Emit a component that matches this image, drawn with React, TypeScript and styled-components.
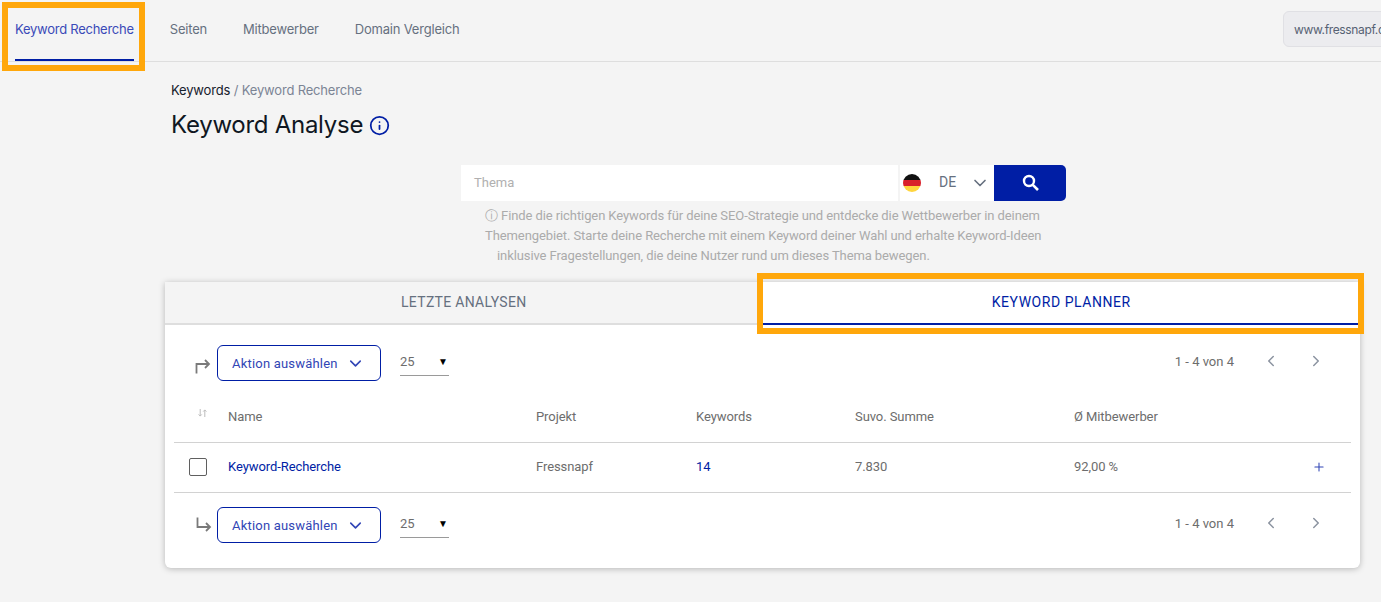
import React from "react";
import styled, { createGlobalStyle } from "styled-components";
import { ChevronDown, ChevronLeft, ChevronRight, Info, Plus } from "lucide-react";

const GlobalStyle = createGlobalStyle`
  html, body { margin: 0; padding: 0; background: #f4f4f4; overflow: hidden; }
  body { font-family: Roboto, "Liberation Sans", sans-serif; }
  * { box-sizing: border-box; }
`;

const BLUE = "#001ea5";

const Page = styled.div`
  position: relative;
  width: 1381px;
  height: 602px;
  overflow: hidden;
`;

const TopBar = styled.div`
  height: 62px;
  border-bottom: 1px solid #dedede;
  display: flex;
  justify-content: space-between;
  padding-left: 15px;
  font-family: Inter, "Noto Sans", sans-serif;
`;

const Nav = styled.nav`
  display: flex;
  gap: 36px;
`;

const NavLink = styled.a<{ $active?: boolean }>`
  height: 61px;
  padding-top: 21px;
  font-size: 13px;
  line-height: 16px;
  letter-spacing: ${(p) => (p.$active ? "-0.26px" : "-0.2px")};
  color: ${(p) => (p.$active ? "#3a4ab8" : "#66707f")};
  border-bottom: 2px solid ${(p) => (p.$active ? BLUE : "transparent")};
`;

const DomainBox = styled.div`
  width: 140px;
  height: 36px;
  margin-top: 11px;
  margin-right: -42px;
  padding: 10px;
  font-size: 12px;
  line-height: 16px;
  letter-spacing: -0.35px;
  white-space: nowrap;
  overflow: hidden;
  color: #566173;
  background: #ececef;
  border: 1px solid #e0e0e4;
  border-radius: 6px;
`;

const Highlight = styled.div`
  position: absolute;
  border: 6px solid #ffa70b;
  pointer-events: none;
`;

const NavHighlight = styled(Highlight)`
  left: 2px;
  top: 2px;
  width: 143px;
  height: 69px;
`;

const TabHighlight = styled(Highlight)`
  left: 757px;
  top: 273px;
  width: 607px;
  height: 61px;
`;

const Main = styled.main`
  padding: 19px 21px 0 165px;
`;

const Breadcrumb = styled.div`
  padding-left: 6px;
  font-family: Inter, "Noto Sans", sans-serif;
  font-size: 13px;
  line-height: 18px;
  letter-spacing: -0.17px;
  color: #7b8494;

  b {
    font-weight: 400;
    color: #16202c;
  }
`;

const Heading = styled.h1`
  display: flex;
  align-items: center;
  gap: 6px;
  margin: 11px 0 0;
  padding-left: 6px;
  font-family: Inter, "Noto Sans", sans-serif;
  font-size: 24px;
  line-height: 30px;
  font-weight: 400;
  letter-spacing: -0.27px;
  color: #0f1722;

  svg {
    color: ${BLUE};
  }
`;

const SearchBlock = styled.section`
  width: 605px;
  margin: 25px 0 0 296px;
`;

const SearchBar = styled.div`
  display: flex;
  height: 36px;
`;

const TopicInput = styled.div`
  flex: 1;
  padding: 10px 13px;
  font-size: 13px;
  line-height: 15px;
  color: #b0b0b0;
  background: #fff;
`;

const CountrySelect = styled.div`
  width: 94px;
  margin-left: 2px;
  display: flex;
  align-items: center;
  padding-left: 3px;
  font-size: 14px;
  color: #66707f;
  background: #fff;

  span {
    margin-left: 18px;
    margin-right: 14px;
    padding-bottom: 3px;
  }
`;

const SearchButton = styled.button`
  width: 72px;
  border: 0;
  padding: 0 0 2px;
  display: flex;
  align-items: center;
  justify-content: center;
  background: ${BLUE};
  color: #fff;
  border-radius: 0 5px 5px 0;
`;

const Hint = styled.p`
  width: 570px;
  margin: 5px 0 0 24px;
  font-size: 13px;
  line-height: 20px;
  letter-spacing: -0.09px;
  color: #ababab;

  span {
    display: block;
    white-space: nowrap;
  }

  span:last-child {
    padding-left: 12px;
  }
`;

const Card = styled.section`
  width: 1195px;
  height: 286px;
  margin-top: 16px;
  background: #fff;
  border-radius: 0 0 6px 6px;
  box-shadow: 0 1px 6px rgba(0, 0, 0, 0.25);
`;

const Tabs = styled.div`
  display: grid;
  grid-template-columns: 1fr 1fr;
  height: 43px;
  background: #f4f4f4;
  border-bottom: 2px solid #dedede;
`;

const Tab = styled.div<{ $active?: boolean }>`
  height: ${(p) => (p.$active ? "43px" : "41px")};
  padding-top: 12px;
  text-align: center;
  font-size: 14px;
  line-height: 16px;
  letter-spacing: ${(p) => (p.$active ? "0.55px" : "0.3px")};
  color: ${(p) => (p.$active ? BLUE : "#66707f")};
  background: ${(p) => (p.$active ? "#fff" : "transparent")};
  border-bottom: ${(p) => (p.$active ? `2px solid ${BLUE}` : "0")};
`;

const Toolbar = styled.div<{ $bottom?: boolean }>`
  display: flex;
  align-items: center;
  height: 36px;
  margin-top: ${(p) => (p.$bottom ? "14px" : "20px")};
  padding: 0 35px 0 27px;
  color: #7a7a7a;
`;

const CornerMark = styled.div<{ $bottom?: boolean }>`
  display: flex;
  width: 21px;
  padding-left: ${(p) => (p.$bottom ? "3.5px" : "2.5px")};
  margin-top: ${(p) => (p.$bottom ? "0" : "5px")};
`;

const ActionButton = styled.button`
  width: 164px;
  height: 36px;
  margin-left: 4px;
  padding: 0 0 0 14px;
  display: flex;
  align-items: center;
  gap: 8px;
  font-family: Roboto, sans-serif;
  font-size: 13px;
  letter-spacing: 0.2px;
  color: #3145b5;
  background: #fff;
  border: 1px solid ${BLUE};
  border-radius: 6px;
`;

const PageSize = styled.div`
  width: 49px;
  height: 25px;
  margin: 0 0 0 19px;
  padding-top: 3px;
  display: flex;
  justify-content: space-between;
  font-size: 13px;
  line-height: 16px;
  color: #6d6d6d;
  border-bottom: 1px solid #9a9a9a;

  i {
    font-style: normal;
    font-size: 10px;
    line-height: 15px;
    color: #000;
    padding-right: 1px;
  }
`;

const Pager = styled.div`
  margin-left: auto;
  margin-bottom: 4px;
  display: flex;
  align-items: center;
  font-size: 13px;
  color: #6d6d6d;

  svg {
    color: #8b93a0;
  }

  span {
    margin-right: 28px;
  }

  svg + svg {
    margin-left: 27px;
  }
`;

const Table = styled.div`
  margin: 9px 9px 0;
`;

const Row = styled.div<{ $header?: boolean }>`
  display: grid;
  grid-template-columns: 54px 308px 160px 159px 219px 1fr 60px;
  align-items: center;
  height: ${(p) => (p.$header ? "53px" : "50px")};
  padding-bottom: ${(p) => (p.$header ? "0" : "2px")};
  border-bottom: 1px solid #d2d2d2;
  font-size: 13px;
  letter-spacing: -0.08px;
  color: #6d6d6d;
`;

const SortMark = styled.div`
  padding-left: 24px;
  padding-bottom: 6px;
  color: #bdbdbd;
  display: flex;
`;

const Checkbox = styled.div`
  width: 18px;
  height: 18px;
  margin-left: 15px;
  border: 1px solid #5f5f5f;
  border-radius: 2px;
`;

const RowLink = styled.span`
  color: ${BLUE};
`;

const AddCell = styled.div`
  display: flex;
  justify-content: flex-end;
  padding-right: 25px;
  color: #3145b5;
`;

const GermanFlag = () => (
  <svg width="18" height="18" viewBox="0 0 18 18">
    <defs>
      <clipPath id="flag-circle">
        <circle cx="9" cy="9" r="9" />
      </clipPath>
    </defs>
    <g clipPath="url(#flag-circle)">
      <rect width="18" height="6" fill="#111" />
      <rect y="6" width="18" height="6" fill="#d9202a" />
      <rect y="12" width="18" height="6" fill="#ffd53d" />
    </g>
  </svg>
);

const SearchIcon = () => (
  <svg width="17" height="17" viewBox="0 0 17 17" fill="none" stroke="currentColor">
    <circle cx="7" cy="7" r="5" strokeWidth="2.4" />
    <path d="M10.8 10.8 16 16" strokeWidth="2.6" />
  </svg>
);

const SortIcon = () => (
  <svg width="9" height="8" viewBox="0 0 9 8" fill="none" stroke="currentColor" strokeWidth="1">
    <path d="M2.2 0v7M.6 5.4l1.6 1.7 1.6-1.7M6.8 8V1M5.2 2.6 6.8.9l1.6 1.7" />
  </svg>
);

// square-cornered arrows, the lucide ones have a rounded bend
const CornerIcon = ({ bottom }: { bottom?: boolean }) => (
  <svg width="16" height="16" viewBox="0 0 16 16" fill="none" stroke="currentColor" strokeWidth="1.8">
    <path d={bottom ? "M1.5 0.5V10H14M10 6l4 4-4 4" : "M1.5 15.5V6H14M10 2l4 4-4 4"} />
  </svg>
);

const TableToolbar = ({ bottom }: { bottom?: boolean }) => (
  <Toolbar $bottom={bottom}>
    <CornerMark $bottom={bottom}>
      <CornerIcon bottom={bottom} />
    </CornerMark>
    <ActionButton>
      Aktion auswählen
      <ChevronDown size={19} strokeWidth={2} />
    </ActionButton>
    <PageSize>
      25
      <i>▼</i>
    </PageSize>
    <Pager>
      <span>1 - 4 von 4</span>
      <ChevronLeft size={18} strokeWidth={2} />
      <ChevronRight size={18} strokeWidth={2} />
    </Pager>
  </Toolbar>
);

export default function App() {
  return (
    <Page>
      <GlobalStyle />
      <TopBar>
        <Nav>
          <NavLink $active>Keyword Recherche</NavLink>
          <NavLink>Seiten</NavLink>
          <NavLink>Mitbewerber</NavLink>
          <NavLink>Domain Vergleich</NavLink>
        </Nav>
        <DomainBox>www.fressnapf.de</DomainBox>
      </TopBar>

      <Main>
        <Breadcrumb>
          <b>Keywords</b> / Keyword Recherche
        </Breadcrumb>
        <Heading>
          Keyword Analyse
          <Info size={21} strokeWidth={2} />
        </Heading>

        <SearchBlock>
          <SearchBar>
            <TopicInput>Thema</TopicInput>
            <CountrySelect>
              <GermanFlag />
              <span>DE</span>
              <ChevronDown size={20} strokeWidth={2} />
            </CountrySelect>
            <SearchButton>
              <SearchIcon />
            </SearchButton>
          </SearchBar>
          <Hint>
            <span>ⓘ Finde die richtigen Keywords für deine SEO-Strategie und entdecke die Wettbewerber in deinem</span>
            <span>Themengebiet. Starte deine Recherche mit einem Keyword deiner Wahl und erhalte Keyword-Ideen</span>
            <span>inklusive Fragestellungen, die deine Nutzer rund um dieses Thema bewegen.</span>
          </Hint>
        </SearchBlock>

        <Card>
          <Tabs>
            <Tab>LETZTE ANALYSEN</Tab>
            <Tab $active>KEYWORD PLANNER</Tab>
          </Tabs>
          <TableToolbar />
          <Table>
            <Row $header>
              <SortMark>
                <SortIcon />
              </SortMark>
              <div>Name</div>
              <div>Projekt</div>
              <div>Keywords</div>
              <div>Suvo. Summe</div>
              <div>Ø Mitbewerber</div>
            </Row>
            <Row>
              <Checkbox />
              <RowLink>Keyword-Recherche</RowLink>
              <div>Fressnapf</div>
              <RowLink>14</RowLink>
              <div>7.830</div>
              <div>92,00 %</div>
              <AddCell>
                <Plus size={14} strokeWidth={1.8} />
              </AddCell>
            </Row>
          </Table>
          <TableToolbar bottom />
        </Card>
      </Main>

      <NavHighlight />
      <TabHighlight />
    </Page>
  );
}
